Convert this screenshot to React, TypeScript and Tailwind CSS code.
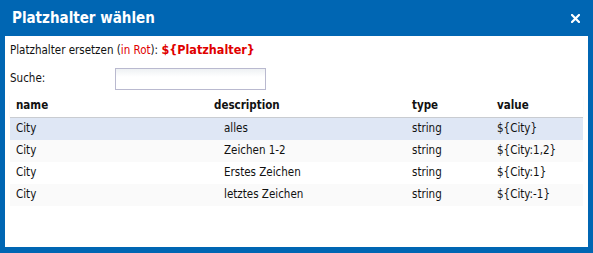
import React from 'react';

const rows = [
  { name: 'City', description: 'alles', type: 'string', value: '${City}' },
  { name: 'City', description: 'Zeichen 1-2', type: 'string', value: '${City:1,2}' },
  { name: 'City', description: 'Erstes Zeichen', type: 'string', value: '${City:1}' },
  { name: 'City', description: 'letztes Zeichen', type: 'string', value: '${City:-1}' },
];

const font = { fontFamily: '"DejaVu Sans Condensed", "DejaVu Sans", "Liberation Sans", sans-serif' };

const App: React.FC = () => {
  return (
    <div className="w-[593px] h-[253px] bg-[#0066b3] flex flex-col" style={font}>
      {/* Title bar */}
      <div className="h-[36px] shrink-0 flex items-center justify-between pl-[12px] pr-[13px]">
        <h1 className="text-[15px] font-bold text-white leading-none">Platzhalter wählen</h1>
        <svg width="9" height="9" viewBox="0 0 9 9">
          <path d="M1 1 L8 8 M8 1 L1 8" stroke="white" strokeWidth="2.2" strokeLinecap="square" />
        </svg>
      </div>

      {/* Content */}
      <div className="flex-1 bg-white mx-[5px] mb-[6px] px-[5px] pt-[6px] text-[11.5px] text-[#111]">
        <p className="leading-[16px]">
          Platzhalter ersetzen (<span className="text-[#e00000]">in Rot</span>):{' '}
          <span className="text-[#e00000] font-bold text-[12.5px]">{'${Platzhalter}'}</span>
        </p>

        <div className="flex items-center mt-[10px] h-[22px]">
          <label className="w-[105px]">Suche:</label>
          <input
            type="text"
            className="w-[151px] h-[22px] border border-[#b9b9cf] bg-gradient-to-b from-[#eef1f3] to-white to-40% outline-none"
          />
        </div>

        {/* Table */}
        <div className="mt-[5px]">
          <div className="grid grid-cols-[198px_198px_85px_1fr] h-[23px] items-center font-bold border-b border-[#c9ccd1] shadow-[0_1px_1px_rgba(0,0,0,0.08)]">
            <span className="pl-[6px]">name</span>
            <span className="pl-[6px]">description</span>
            <span className="pl-[6px]">type</span>
            <span className="pl-[6px]">value</span>
          </div>
          {rows.map((r, i) => (
            <div
              key={i}
              className={`grid grid-cols-[198px_198px_85px_1fr] h-[22px] items-center ${
                i === 0 ? 'bg-[#dfe7f5]' : i % 2 === 1 ? 'bg-[#fafafa]' : 'bg-white'
              }`}
            >
              <span className="pl-[6px]">{r.name}</span>
              <span className="pl-[16px]">{r.description}</span>
              <span className="pl-[6px]">{r.type}</span>
              <span className="pl-[6px]">{r.value}</span>
            </div>
          ))}
        </div>
      </div>
    </div>
  );
};

export default App;
